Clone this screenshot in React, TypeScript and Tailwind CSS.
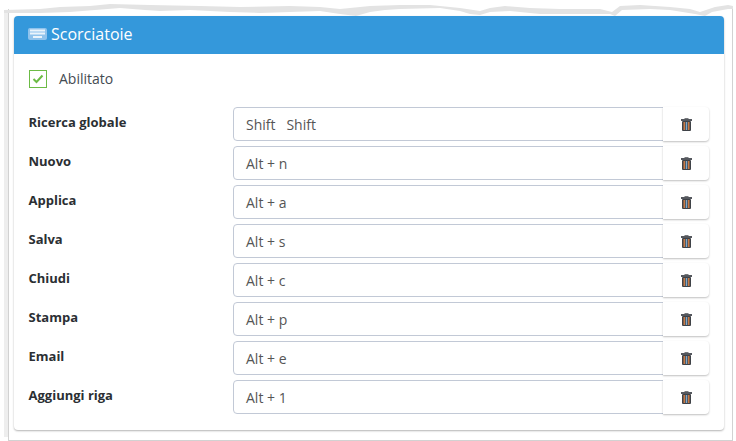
const shortcuts = [
  { label: "Ricerca globale", value: "Shift\u00a0\u00a0 Shift" },
  { label: "Nuovo", value: "Alt + n" },
  { label: "Applica", value: "Alt + a" },
  { label: "Salva", value: "Alt + s" },
  { label: "Chiudi", value: "Alt + c" },
  { label: "Stampa", value: "Alt + p" },
  { label: "Email", value: "Alt + e" },
  { label: "Aggiungi riga", value: "Alt + 1" },
];

function KeyboardIcon() {
  return (
    <svg width="19" height="12" viewBox="0 0 19 12" className="shrink-0">
      <rect x="0" y="0" width="19" height="12" rx="2" fill="#8fc3ec" />
      <rect x="2" y="1.5" width="15" height="2" fill="#eaf4fb" />
      <rect x="2" y="4.5" width="15" height="2" fill="#eaf4fb" />
      <rect x="5" y="8" width="9" height="2" fill="#eaf4fb" />
    </svg>
  );
}

function TrashIcon() {
  return (
    <svg width="11" height="13" viewBox="0 0 11 13">
      <rect x="3.5" y="0" width="4" height="1.5" fill="#77797d" />
      <rect x="0" y="1" width="11" height="2" fill="#55585e" />
      <rect x="1" y="3" width="9" height="10" rx="1" fill="#3f4247" />
      <rect x="2.5" y="4" width="1.5" height="8" fill="#c97a45" />
      <rect x="4.75" y="4" width="1.5" height="8" fill="#7fa9c9" />
      <rect x="7" y="4" width="1.5" height="8" fill="#c97a45" />
    </svg>
  );
}

// torn paper edge of the screenshot plus the soft band on its left
function TornEdge() {
  return (
    <svg width="736" height="441" viewBox="0 0 736 441" className="pointer-events-none absolute left-0 top-0">
      <rect x="4" y="10" width="4" height="427" fill="#eeeeee" />
      <path
        fill="#e3e3e3"
        d="M4 10 L40 9 L60 7 L90 6 L110 4 L150 5 L200 6 L240 7 L290 6 L320 7 L340 9 L370 6 L400 5 L430 5 L460 8 L480 11 L490 8 L505 6 L530 8 L560 9 L600 9 L612 12 L620 6 L640 5 L655 6 L670 7 L690 9 L700 12 L715 7 L728 5 L733 6 L733 9 L728 9 L712 12 L705 16 L695 14 L670 10 L650 9 L622 10 L615 16 L610 14 L570 14 L540 14 L510 11 L490 12 L480 15 L470 14 L460 11 L440 8 L400 9 L385 10 L370 12 L356 16 L340 14 L320 11 L290 12 L260 13 L230 12 L190 10 L160 11 L145 10 L120 8 L70 12 L40 13 L9 13 L4 13 Z"
      />
    </svg>
  );
}

export default function App() {
  return (
    <div className="relative h-[441px] w-[736px] overflow-hidden bg-white pl-[8px] pt-[9px] font-['Open_Sans',sans-serif]">
      <div className="h-[432px] w-[725px] border-x border-b border-[#d2d2d2] pl-[5px] pt-[7px]">
        <div className="h-[414px] w-[710px] rounded-[4px] bg-white shadow-[0_1px_2px_rgba(0,0,0,0.3)]">
          <div className="flex h-[38px] items-center gap-[4px] rounded-t-[4px] bg-[#3498db] pb-[2px] pl-[14px] text-[16px] text-white">
            <KeyboardIcon />
            <span>Scorciatoie</span>
          </div>
          <div className="flex h-[53px] items-center pb-[3px] pl-[15px] text-[14px] text-[#444b52]">
            <span className="flex h-[18px] w-[18px] items-center justify-center border border-[#6cbb45]">
              <svg width="12" height="10" viewBox="0 0 12 10">
                <path d="M1.5 5 L4.5 8 L10.5 1.5" fill="none" stroke="#6cbb45" strokeWidth="2" />
              </svg>
            </span>
            <span className="ml-[12px] pb-[2px]">Abilitato</span>
          </div>
          <div className="flex flex-col gap-[5px] pl-[14.5px]">
            {shortcuts.map((s) => (
              <div key={s.label} className="flex h-[34px]">
                <label className="w-[204.5px] pt-[6px] text-[13px] font-bold text-[#2b2f33]">
                  {s.label}
                </label>
                <div className="flex w-[431px] items-center rounded-l-[4px] border border-[#c2c9d6] pl-[12px] text-[14px] text-[#555]">
                  {s.value}
                </div>
                <button className="-ml-px flex w-[46px] items-center justify-center rounded-r-[4px] bg-white shadow-[0_1px_2px_rgba(0,0,0,0.25)]">
                  <TrashIcon />
                </button>
              </div>
            ))}
          </div>
        </div>
      </div>
      <TornEdge />
    </div>
  );
}
